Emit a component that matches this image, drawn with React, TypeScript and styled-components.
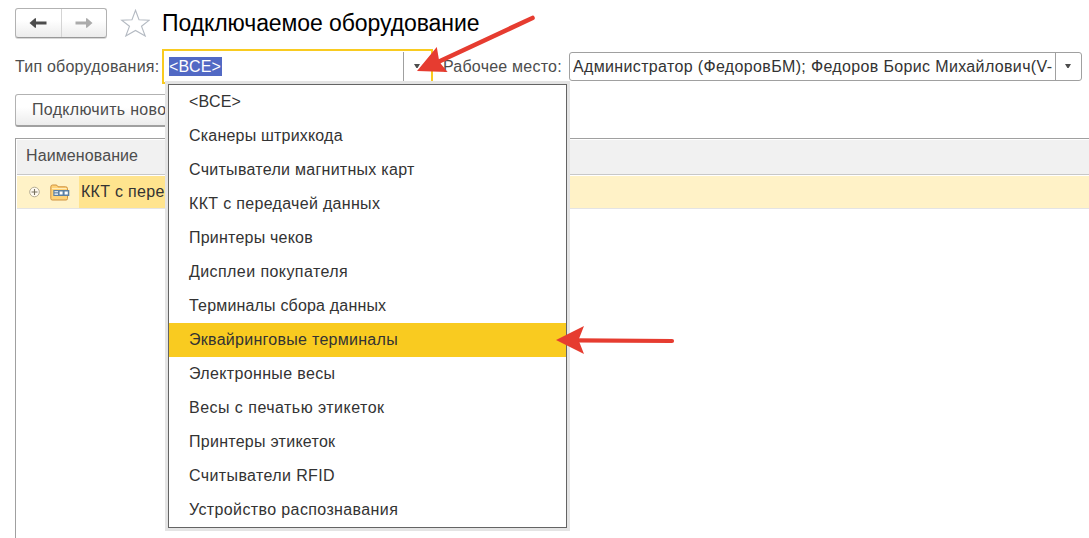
import React from "react";
import styled, { createGlobalStyle } from "styled-components";

const Global = createGlobalStyle`
  * { box-sizing: border-box; }
  body { margin: 0; background: #fff; overflow: hidden; }
`;

const Page = styled.main`
  position: relative;
  width: 1089px;
  height: 538px;
  overflow: hidden;
  display: flex;
  flex-direction: column;
  padding-left: 15px;
  background: #fff;
  color: #333;
  font: 16px/20px "Liberation Sans", Arial, sans-serif;
  white-space: nowrap;
`;

const TitleBar = styled.header`
  display: flex;
  align-items: center;
  height: 30px;
  margin-top: 8px;
`;

const NavGroup = styled.div`
  display: flex;
  width: 92px;
  height: 30px;
  border: 1px solid #b2b2b2;
  border-bottom-color: #999;
  border-radius: 3px;
  background: linear-gradient(#fff 40%, #ececec);
  box-shadow: 0 1px 0 #d8d8d8;
`;

const NavButton = styled.button`
  flex: 1;
  display: flex;
  align-items: center;
  justify-content: center;
  padding: 0;
  border: 0;
  background: none;
  & + & { border-left: 1px solid #d4d4d4; }
`;

const Star = styled.svg`
  margin-left: 13px;
`;

const Title = styled.h1`
  margin: 0 0 0 12px;
  color: #000;
  font-size: 23px;
  line-height: 30px;
  font-weight: 400;
  letter-spacing: -0.08px;
`;

const Filters = styled.div`
  display: flex;
  align-items: center;
  height: 35px;
  margin-top: 11px;
`;

const Label = styled.label<{ $width: number }>`
  width: ${(p) => p.$width}px;
  flex: none;
  color: #4d4d4d;
  letter-spacing: 0.22px;
`;

const Combo = styled.div<{ $width: number; $active?: boolean }>`
  display: flex;
  flex: none;
  width: ${(p) => p.$width}px;
  height: ${(p) => (p.$active ? 35 : 29)}px;
  border: ${(p) => (p.$active ? "2px solid #f9cb20" : "1px solid #a0a0a0")};
  border-radius: ${(p) => (p.$active ? 0 : 3)}px;
  padding: ${(p) => (p.$active ? "1px 1px 1px 5px" : "0 0 0 3px")};
  margin-right: 10px;
  background: #fff;
`;

const Value = styled.div`
  flex: 1;
  display: flex;
  align-items: center;
  overflow: hidden;
  letter-spacing: 0.35px;
`;

const Selection = styled.span`
  height: 19px;
  padding-right: 1px;
  line-height: 19px;
  letter-spacing: 0.2px;
  background: #5269c4;
  color: #fff;
`;

const Caret = styled.div<{ $width: number }>`
  width: ${(p) => p.$width}px;
  display: flex;
  align-items: center;
  justify-content: center;
  padding: 0 1px 2px 0;
  border-left: 1px solid #a0a0a0;
`;

const AddButton = styled.button`
  align-self: flex-start;
  width: 154px;
  height: 33px;
  margin-top: 10px;
  padding: 0 0 0 16px;
  text-align: left;
  border: 1px solid #b2b2b2;
  border-bottom: 2px solid #a0a0a0;
  border-radius: 3px;
  background: linear-gradient(#fff 40%, #ececec);
  color: #4d4d4d;
  font: inherit;
  letter-spacing: 0.3px;
`;

const Table = styled.section`
  flex: 1;
  margin-top: 11px;
  border: solid #a0a0a0;
  border-width: 1px 0 0 1px;
  padding: 1px 0 0 1px;
`;

const HeadRow = styled.div`
  height: 35px;
  padding: 6px 0 0 9px;
  background: #f1f1f1;
  border-bottom: 1px solid #c8c8c8;
  color: #4d4d4d;
  letter-spacing: 0.1px;
`;

const Row = styled.div`
  display: flex;
  align-items: center;
  height: 33px;
  margin-top: 1px;
  background: #fff2c7;
  border-bottom: 1px solid #e4e4e4;
`;

const RowIcons = styled.div`
  display: flex;
  align-items: center;
  gap: 10px;
  width: 62px;
  padding-left: 11px;
`;

const RowName = styled.div`
  width: 300px;
  height: 32px;
  padding-left: 2px;
  line-height: 31px;
  letter-spacing: 0.3px;
  background: #ffe48e;
`;

const Menu = styled.ul`
  position: absolute;
  left: 168px;
  top: 84px;
  width: 399px;
  margin: 0;
  padding: 0;
  list-style: none;
  border: 1px solid #646464;
  background: #fff;
  box-shadow: 0 0 0 3px #e4e4e4;
`;

const MenuItem = styled.li<{ $tracking: number; $selected?: boolean }>`
  height: 34px;
  padding-left: 20px;
  line-height: 33px;
  letter-spacing: ${(p) => p.$tracking}px;
  background: ${(p) => (p.$selected ? "#f9cb20" : "transparent")};
`;

const Arrows = styled.svg`
  position: absolute;
  left: 0;
  top: 0;
  pointer-events: none;
`;

const items: [string, number][] = [
  ["<ВСЕ>", 0.2],
  ["Сканеры штрихкода", 0.2],
  ["Считыватели магнитных карт", 0.28],
  ["ККТ с передачей данных", 0.32],
  ["Принтеры чеков", 0.22],
  ["Дисплеи покупателя", 0.42],
  ["Терминалы сбора данных", 0.18],
  ["Эквайринговые терминалы", 0.28],
  ["Электронные весы", 0.35],
  ["Весы с печатью этикеток", 0.47],
  ["Принтеры этикеток", 0.27],
  ["Считыватели RFID", 0.38],
  ["Устройство распознавания", 0.38],
];

const ArrowIcon = ({ color, flip }: { color: string; flip?: boolean }) => (
  <svg width="18" height="10" viewBox="0 0 18 10">
    <path
      d="M0.5 5 L6 0.3 H7 V3.6 H17.5 V6.4 H7 V9.7 H6 Z"
      fill={color}
      transform={flip ? "matrix(-1 0 0 1 18 0)" : undefined}
    />
  </svg>
);

const Triangle = () => (
  <svg width="6" height="4" viewBox="0 0 6 4">
    <path d="M0 0H6L3.6 4H2.4Z" fill="#4d4d4d" />
  </svg>
);

export default function App() {
  return (
    <>
      <Global />
      <Page>
        <TitleBar>
          <NavGroup>
            <NavButton><ArrowIcon color="#4d4d4d" /></NavButton>
            <NavButton><ArrowIcon color="#ababab" flip /></NavButton>
          </NavGroup>
          <Star width="30" height="28" viewBox="0 0 30 28">
            <path
              d="M15.5 1.3 L19 10.7 L29.3 11.2 L21.5 17.3 L25.2 27 L15.5 21.5 L5.8 27 L9.5 17.3 L1.7 11.2 L12 10.7 Z"
              fill="#fff" stroke="#b4bac2" strokeWidth="1.1"
            />
          </Star>
          <Title>Подключаемое оборудование</Title>
        </TitleBar>
        <Filters>
          <Label $width={147}>Тип оборудования:</Label>
          <Combo $width={271} $active>
            <Value><Selection>&lt;ВСЕ&gt;</Selection></Value>
            <Caret $width={27}><Triangle /></Caret>
          </Combo>
          <Label $width={126}>Рабочее место:</Label>
          <Combo $width={513}>
            <Value>Администратор (ФедоровБМ); Федоров Борис Михайлович(V-</Value>
            <Caret $width={26}><Triangle /></Caret>
          </Combo>
        </Filters>
        <AddButton>Подключить ново</AddButton>
        <Table>
          <HeadRow>Наименование</HeadRow>
          <Row>
            <RowIcons>
              <svg width="12" height="12" viewBox="0 0 12 12">
                <circle cx="6.5" cy="6" r="4.8" fill="#fffaf0" stroke="#b5ad94" />
                <path d="M3.5 6H9.5M6.5 3V9" stroke="#77715f" strokeWidth="1.1" />
              </svg>
              <svg width="20" height="17" viewBox="0 0 20 17">
                <path d="M0.8 14.5V3Q0.8 1 2.5 1H6Q7.3 1 8 2.8H15.5Q17.5 2.8 17.5 4.5V14.5Q17.5 16 16 16H2.3Q0.8 16 0.8 14.5Z" fill="#ffd277" stroke="#cf9240" />
                <path d="M2 4.5H16.5" stroke="#ffedba" />
                <path d="M3.3 6H19.3V12H3.3Z" fill="#5b7fa3" />
                <path d="M4.5 7.3H8V8.3H4.5ZM4.5 9.5H8V10.7H4.5ZM9.6 7.5H12.6V10.5H9.6ZM14.6 7.5H17.8V10.5H14.6Z" fill="#fff" />
              </svg>
            </RowIcons>
            <RowName>ККТ с пере</RowName>
          </Row>
        </Table>
        <Menu>
          {items.map(([name, tracking]) => (
            <MenuItem key={name} $tracking={tracking} $selected={name === "Эквайринговые терминалы"}>
              {name}
            </MenuItem>
          ))}
        </Menu>
        <Arrows width="1089" height="538" viewBox="0 0 1089 538">
          <g fill="#e63c30" stroke="#e63c30" strokeLinecap="round">
            <path d="M532.5 18 L438 62" strokeWidth="4.6" />
            <path d="M417 71 L436.8 47 L439 60 L441 64 L447.6 72 Z" stroke="none" />
            <path d="M672 341 L576 340.3" strokeWidth="4.2" />
            <path d="M556 340 L584 326 L578.5 340 L584 354 Z" stroke="none" />
          </g>
        </Arrows>
      </Page>
    </>
  );
}
